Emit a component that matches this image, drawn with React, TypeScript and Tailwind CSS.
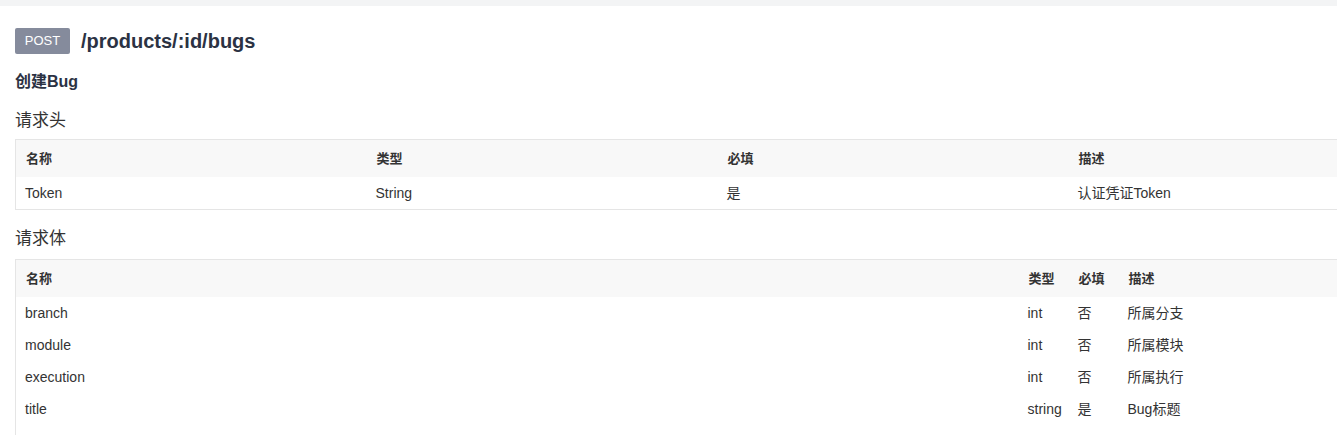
const headerFields = [
  { name: 'Token', type: 'String', required: '是', desc: '认证凭证Token' },
]

const bodyFields = [
  { name: 'branch', type: 'int', required: '否', desc: '所属分支' },
  { name: 'module', type: 'int', required: '否', desc: '所属模块' },
  { name: 'execution', type: 'int', required: '否', desc: '所属执行' },
  { name: 'title', type: 'string', required: '是', desc: 'Bug标题' },
]

const font = { fontFamily: '"Liberation Sans", Arial, "Noto Sans CJK SC", sans-serif' }

export default function App() {
  return (
    <div className="h-[435px] w-[1337px] overflow-hidden bg-white text-[#333]" style={font}>
      <div className="h-[6px] bg-[#f3f4f5]" />

      <div className="pl-[15px]">
        {/* endpoint title */}
        <div className="mt-[21px] flex items-center gap-[11px]">
          <span className="flex h-[26px] w-[55px] items-center justify-center rounded-[2px] bg-[#858b9c] text-[13px] text-white">
            POST
          </span>
          <h1 className="text-[20px] font-bold leading-[28px] text-[#2b3243]">/products/:id/bugs</h1>
        </div>

        <h2 className="mt-[17px] text-[16px] font-bold leading-[20px] text-[#2b3243]">创建Bug</h2>

        <h3 className="mt-[18px] text-[17px] leading-[22px] text-[#333]">请求头</h3>

        <table className="mt-[7px] w-[1404px] table-fixed border-collapse border border-[#e5e5e5] text-left">
          <thead>
            <tr className="h-[37px] bg-[#f8f8f8]">
              <th className="w-[351px] px-[10px] pt-[1px] text-[13px] font-bold">名称</th>
              <th className="w-[351px] px-[10px] pt-[1px] text-[13px] font-bold">类型</th>
              <th className="w-[351px] px-[10px] pt-[1px] text-[13px] font-bold">必填</th>
              <th className="w-[351px] px-[10px] pt-[1px] text-[13px] font-bold">描述</th>
            </tr>
          </thead>
          <tbody>
            {headerFields.map((f) => (
              <tr key={f.name} className="h-[33px] text-[14px]">
                <td className="px-[9px] pt-[2px]">{f.name}</td>
                <td className="px-[9px] pt-[2px]">{f.type}</td>
                <td className="px-[9px] pt-[2px]">{f.required}</td>
                <td className="px-[9px] pt-[2px]">{f.desc}</td>
              </tr>
            ))}
          </tbody>
        </table>

        <h3 className="mt-[18px] text-[17px] leading-[22px] text-[#333]">请求体</h3>

        <table className="mt-[9px] w-[1404px] table-fixed border-collapse border border-b-0 border-[#e5e5e5] text-left">
          <thead>
            <tr className="h-[37px] bg-[#f8f8f8]">
              <th className="w-[1003px] px-[10px] pt-[1px] text-[13px] font-bold">名称</th>
              <th className="w-[50px] px-[10px] pt-[1px] text-[13px] font-bold">类型</th>
              <th className="w-[50px] px-[10px] pt-[1px] text-[13px] font-bold">必填</th>
              <th className="px-[10px] pt-[1px] text-[13px] font-bold">描述</th>
            </tr>
          </thead>
          <tbody>
            {bodyFields.map((f) => (
              <tr key={f.name} className="h-[32px] text-[14px]">
                <td className="px-[9px] pt-[2px]">{f.name}</td>
                <td className="px-[9px] pt-[2px]">{f.type}</td>
                <td className="px-[9px] pt-[2px]">{f.required}</td>
                <td className="px-[9px] pt-[2px]">{f.desc}</td>
              </tr>
            ))}
            {/* table continues below the fold */}
            <tr className="h-[32px]">
              <td colSpan={4} />
            </tr>
          </tbody>
        </table>
      </div>
    </div>
  )
}
